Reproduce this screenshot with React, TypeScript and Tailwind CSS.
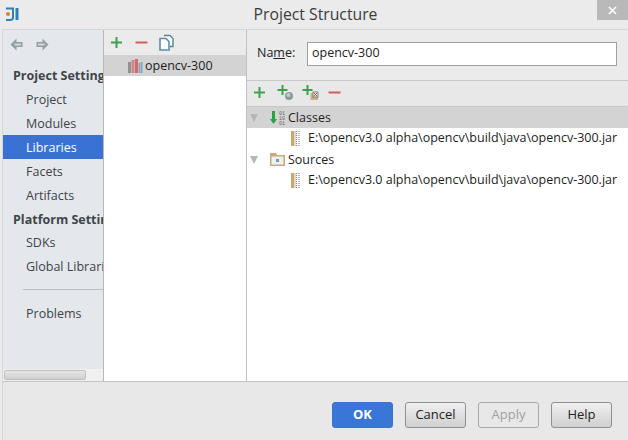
const FONT = "font-['Open_Sans','Noto_Sans',sans-serif]";

function Plus({ size = 13 }: { size?: number }) {
  return (
    <svg width={size} height={size} viewBox="0 0 13 13" className="shrink-0">
      <path d="M6.5 1v11M1 6.5h11" stroke="#3f9f50" strokeWidth="2" fill="none" />
    </svg>
  );
}

function Minus() {
  return (
    <svg width="13" height="13" viewBox="0 0 13 13" className="shrink-0">
      <path d="M0.5 6.5h12" stroke="#d0605a" strokeWidth="2" fill="none" />
    </svg>
  );
}

function PlusGlobe() {
  return (
    <svg width="17" height="17" viewBox="0 0 17 17" className="shrink-0">
      <path d="M5.5 1v10M0.5 6h10" stroke="#3f9f50" strokeWidth="2" fill="none" />
      <circle cx="12" cy="12" r="4" fill="#8a9a9a" />
      <circle cx="11.5" cy="11" r="2" fill="#c0ccc4" />
    </svg>
  );
}

function PlusBox() {
  return (
    <svg width="17" height="17" viewBox="0 0 17 17" className="shrink-0">
      <path d="M5.5 1v10M0.5 6h10" stroke="#3f9f50" strokeWidth="2" fill="none" />
      <rect x="8.5" y="9" width="7.5" height="7" fill="#cfae82" />
      <rect x="11" y="8" width="5" height="5" fill="#f0ece4" stroke="#666" strokeWidth="0.8" />
      <path d="M12 9l3 3M15 9l-3 3" stroke="#555" strokeWidth="0.8" />
    </svg>
  );
}

function Copy() {
  return (
    <svg width="15" height="17" viewBox="0 0 15 17" className="shrink-0">
      <path d="M5 1.5h6l3 3v8h-3" fill="#fff" stroke="#5c7f95" strokeWidth="1.4" />
      <path d="M1 4.5h6l3 3v8.5H1z" fill="#fff" stroke="#5c8ea8" strokeWidth="1.6" />
    </svg>
  );
}

function Arrow({ flip }: { flip?: boolean }) {
  return (
    <svg width="13" height="13" viewBox="0 0 13 13" className={flip ? "shrink-0 -scale-x-100" : "shrink-0"}>
      <path d="M0.5 6.5L6.5 0.5v3.5h6v5h-6v3.5z" fill="#969ea1" />
      <path d="M4.5 5.5h6.5v2H4.5z" fill="#d3d9dc" />
    </svg>
  );
}

function LibIcon() {
  return (
    <svg width="15" height="14" viewBox="0 0 15 14" className="shrink-0">
      <rect x="0" y="3" width="3" height="11" fill="#9a8f8f" />
      <rect x="3.5" y="1" width="3" height="13" fill="#c98a8a" />
      <rect x="7" y="0" width="3" height="14" fill="#d66a6a" />
      <rect x="10.5" y="4" width="1.5" height="10" fill="#a0a0a0" />
      <rect x="12.5" y="3" width="2" height="11" fill="#6fb0cc" />
    </svg>
  );
}

function JarIcon() {
  return (
    <svg width="9" height="15" viewBox="0 0 9 15" className="shrink-0">
      <rect x="0" y="0" width="3" height="15" fill="#c9a86c" />
      <rect x="3" y="0" width="2" height="15" fill="#e5dcc8" />
      <path d="M5.5 0v15M8 0v15" stroke="#888" strokeWidth="1.2" strokeDasharray="1 1" />
    </svg>
  );
}

function Triangle() {
  return <span className="w-0 h-0 border-x-[4px] border-x-transparent border-t-[8px] border-t-[#b4b8b8]" />;
}

function ClassesIcon() {
  return (
    <svg width="16" height="16" viewBox="0 0 16 16" className="shrink-0">
      <path d="M3.5 1v9" stroke="#2f9e44" strokeWidth="3" fill="none" />
      <path d="M0 9h7l-3.5 5z" fill="#2f9e44" />
      <text x="9" y="5" fontSize="5" fontFamily="'Liberation Mono',monospace" fill="#666">01</text>
      <text x="9" y="10" fontSize="5" fontFamily="'Liberation Mono',monospace" fill="#666">10</text>
      <text x="9" y="15" fontSize="5" fontFamily="'Liberation Mono',monospace" fill="#666">01</text>
    </svg>
  );
}

function FolderIcon() {
  return (
    <svg width="16" height="13" viewBox="0 0 16 13" className="shrink-0">
      <path d="M0 0h6l1 2h8v11H0z" fill="#c7ab7a" />
      <rect x="1.5" y="3.5" width="12" height="8" fill="#eef0f2" />
      <rect x="6" y="6" width="3" height="3" fill="#6f9cc8" />
    </svg>
  );
}

function AppIcon() {
  return (
    <svg width="16" height="16" viewBox="0 0 16 16" className="shrink-0">
      <path d="M1 2.5h7v9q0 2.5-3 2.5H1" fill="none" stroke="#2f80b8" strokeWidth="2" />
      <path d="M12 2v12" stroke="#2f80b8" strokeWidth="3" />
      <circle cx="3" cy="8" r="2" fill="#d9822b" />
    </svg>
  );
}

function NavItem({ label, active }: { label: string; active?: boolean }) {
  return (
    <div className={`h-6 pl-[23px] pt-[2px] shrink-0 flex items-center text-[12.5px] whitespace-nowrap ${active ? "bg-[#3a72d4] text-white" : "text-[#3f4347]"}`}>
      {label}
    </div>
  );
}

function NavHeader({ label, short }: { label: string; short?: boolean }) {
  return (
    <div className={`${short ? "h-[23px]" : "h-6"} pl-2.5 pt-[3px] shrink-0 flex items-center text-[12.5px] font-bold text-[#40454a] whitespace-nowrap`}>
      {label}
    </div>
  );
}

function Button({ label, primary, disabled }: { label: string; primary?: boolean; disabled?: boolean }) {
  let cls = "border-[#8f8f8f] bg-gradient-to-b from-[#f0f0f0] to-[#d0d0d0] text-[#222]";
  if (primary) cls = "border-[#3a72d4] bg-[#3a76d6] text-white font-bold";
  if (disabled) cls = "border-[#a8a8a8] bg-[#e8e8e8] text-[#a0a0a0]";
  return (
    <button className={`w-[61px] h-[26px] rounded-[3px] border text-[13px] flex items-center justify-center ${cls}`}>
      {label}
    </button>
  );
}

function TreeRow({ label, icon, arrow, selected }: { label: string; icon: React.ReactNode; arrow?: boolean; selected?: boolean }) {
  return (
    <div className={`h-[21px] flex items-center text-[12.5px] text-[#1e1e1e] whitespace-nowrap overflow-hidden ${selected ? "bg-[#d3d3d3]" : ""}`}>
      <div className={`${arrow ? "pl-[3px]" : "pl-[44px]"} flex items-center`}>
        {arrow && <div className="w-[20px] flex items-center"><Triangle /></div>}
        {icon}
      </div>
      <span className={arrow ? "ml-[2px] pt-[2px]" : "ml-[8px]"}>{label}</span>
    </div>
  );
}

const JAR = "E:\\opencv3.0 alpha\\opencv\\build\\java\\opencv-300.jar";

export default function App() {
  return (
    <div className={`w-[628px] h-[440px] bg-[#ebebeb] flex flex-col overflow-hidden ${FONT}`}>
      <div className="h-[29px] shrink-0 flex items-start">
        <div className="pl-[5px] pt-[6px]"><AppIcon /></div>
        <div className="flex-1 text-center text-[15.75px] text-[#3c3c3c] pt-[3px] pl-[13px]">Project Structure</div>
        <div className="w-[31px] h-[20px] bg-[#b9b9b9] flex items-center justify-center">
          <svg width="9" height="9" viewBox="0 0 9 9"><path d="M1 1l7 7M8 1l-7 7" stroke="#fff" strokeWidth="1.6" /></svg>
        </div>
      </div>

      <div className="flex-1 ml-[2px] flex flex-col border-t border-l border-[#d6d6d6] min-h-0">
        <div className="h-[352px] flex shrink-0 border-b border-[#c4c4c4]">
          <div className="w-[101px] shrink-0 bg-[#e4e8ec] border-r border-[#b8b8b8] flex flex-col overflow-hidden">
            <div className="h-[33px] flex items-center gap-[13px] pl-[7px] pb-[5px] shrink-0">
              <Arrow />
              <Arrow flip />
            </div>
            <NavHeader label="Project Settings" />
            <NavItem label="Project" />
            <NavItem label="Modules" />
            <NavItem label="Libraries" active />
            <NavItem label="Facets" />
            <NavItem label="Artifacts" />
            <NavHeader label="Platform Settings" short />
            <NavItem label="SDKs" />
            <NavItem label="Global Libraries" />
            <div className="h-[23px] flex items-center pl-[20px] shrink-0"><div className="w-full h-px bg-[#bcbcbc]" /></div>
            <NavItem label="Problems" />
            <div className="flex-1" />
            <div className="h-[12px] bg-[#f0f0f0] shrink-0 px-[1px] pb-[1px]">
              <div className="w-[82px] h-[10px] mt-[1px] rounded-[2px] border border-[#c0c0c0] bg-gradient-to-b from-[#e6e6e6] to-[#cfcfcf]" />
            </div>
          </div>

          <div className="w-[143px] shrink-0 bg-white border-r border-[#c0c0c0] flex flex-col">
            <div className="h-[25px] bg-[#ebebeb] flex items-center pl-[6px] shrink-0">
              <Plus />
              <div className="ml-[12px]"><Minus /></div>
              <div className="ml-[11px]"><Copy /></div>
            </div>
            <div className="h-[21px] bg-[#d3d3d3] flex items-center pl-[24px] text-[12.5px] text-[#1e1e1e]">
              <LibIcon />
              <span className="ml-[2px] pt-[2px]">opencv-300</span>
            </div>
          </div>

          <div className="flex-1 min-w-0 flex flex-col bg-white">
            <div className="h-[51px] shrink-0 bg-[#ebebeb] border-b border-[#c8c8c8] flex items-center pl-[10px] pr-[11px] pb-[3px]">
              <span className="text-[12.5px] text-[#222] w-[50px]">Na<span className="underline">m</span>e:</span>
              <div className="flex-1 h-[24px] bg-white border border-[#a0a0a0] pl-[4px] flex items-center text-[12.5px] text-[#222]">opencv-300</div>
            </div>
            <div className="h-[26px] shrink-0 bg-[#e8e8e8] border-b border-[#c8c8c8] flex items-center pl-[6px] pb-[3px]">
              <Plus />
              <div className="ml-[11px]"><PlusGlobe /></div>
              <div className="ml-[8px]"><PlusBox /></div>
              <div className="ml-[9px]"><Minus /></div>
            </div>
            <TreeRow label="Classes" icon={<ClassesIcon />} arrow selected />
            <TreeRow label={JAR} icon={<JarIcon />} />
            <TreeRow label="Sources" icon={<FolderIcon />} arrow />
            <TreeRow label={JAR} icon={<JarIcon />} />
          </div>
        </div>

        <div className="flex-1 bg-[#e8e8e8] flex items-center justify-end gap-[12px] pr-[16px] pt-[8px]">
          <Button label="OK" primary />
          <Button label="Cancel" />
          <Button label="Apply" disabled />
          <Button label="Help" />
        </div>
      </div>
    </div>
  );
}
